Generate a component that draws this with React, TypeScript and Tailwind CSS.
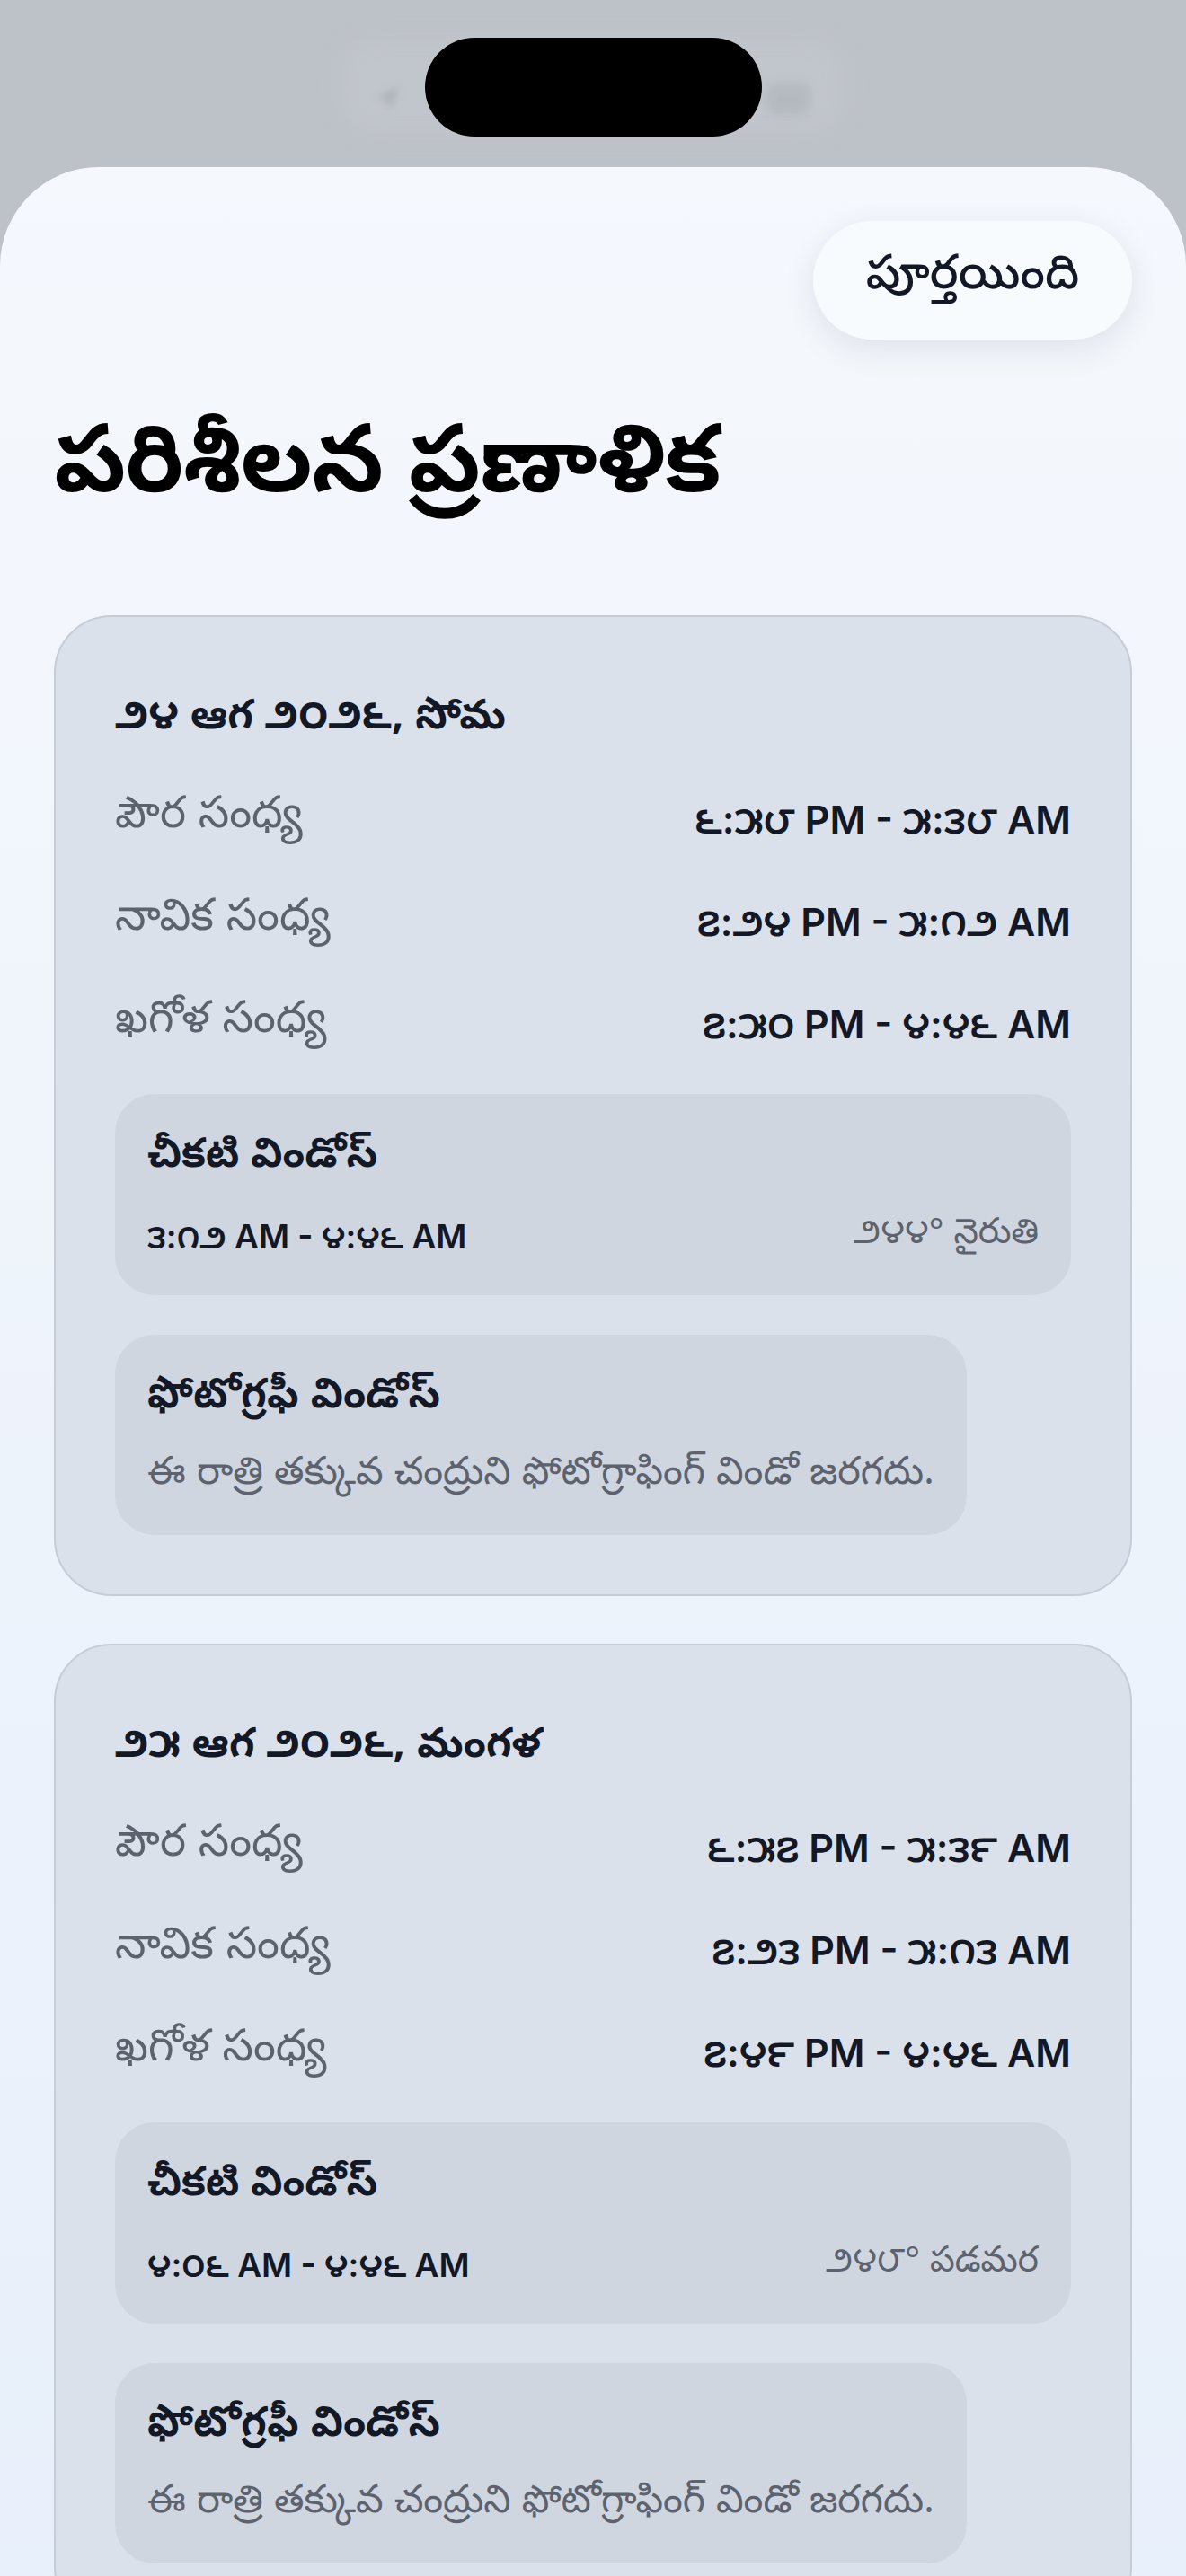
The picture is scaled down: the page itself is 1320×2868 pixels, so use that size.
import React from 'react';

type Day = {
  date: string;
  rows: { label: string; value: string }[];
  dark: { time: string; dir: string };
  photo: string;
};

const DAYS: Day[] = [
  {
    date: '౨౪ ఆగ ౨౦౨౬, సోమ',
    rows: [
      { label: 'పౌర సంధ్య', value: '౬:౫౮ PM - ౫:౩౮ AM' },
      { label: 'నావిక సంధ్య', value: '౭:౨౪ PM - ౫:౧౨ AM' },
      { label: 'ఖగోళ సంధ్య', value: '౭:౫౦ PM - ౪:౪౬ AM' },
    ],
    dark: { time: '౩:౧౨ AM - ౪:౪౬ AM', dir: '౨౪౪° నైరుతి' },
    photo: 'ఈ రాత్రి తక్కువ చంద్రుని ఫోటోగ్రాఫింగ్ విండో జరగదు.',
  },
  {
    date: '౨౫ ఆగ ౨౦౨౬, మంగళ',
    rows: [
      { label: 'పౌర సంధ్య', value: '౬:౫౭ PM - ౫:౩౯ AM' },
      { label: 'నావిక సంధ్య', value: '౭:౨౩ PM - ౫:౧౩ AM' },
      { label: 'ఖగోళ సంధ్య', value: '౭:౪౯ PM - ౪:౪౬ AM' },
    ],
    dark: { time: '౪:౦౬ AM - ౪:౪౬ AM', dir: '౨౪౮° పడమర' },
    photo: 'ఈ రాత్రి తక్కువ చంద్రుని ఫోటోగ్రాఫింగ్ విండో జరగదు.',
  },
];

const TE = "font-['Noto_Sans_Telugu','Noto_Sans',Inter,sans-serif]";
const NUM = "font-['Inter','Noto_Sans_Telugu','Noto_Sans',sans-serif]";

function DayCard({ day }: { day: Day }) {
  return (
    <div className="rounded-[64px] border-2 border-[#c7cdd6] bg-[#dbe1ea] px-[66px] pt-[80px] pb-[66px]">
      <h3 className={`${TE} text-[46px] leading-[70px] font-bold text-[#121826]`}>{day.date}</h3>

      <div className="mt-[18px] flex flex-col">
        {day.rows.map((r) => (
          <div key={r.label} className="flex h-[114px] items-center justify-between">
            <span className={`${TE} text-[49px] text-[#5c636f]`}>{r.label}</span>
            <span className={`${NUM} text-[43px] font-semibold text-[#121826]`}>{r.value}</span>
          </div>
        ))}
      </div>

      <div className="mt-[21px] rounded-[44px] bg-[#d0d6df] px-[36px] pt-[43px] pb-[35px]">
        <h4 className={`${TE} text-[45px] leading-[60px] font-bold text-[#121826]`}>చీకటి విండోస్</h4>
        <div className="mt-[26px] flex h-[60px] items-center justify-between">
          <span className={`${NUM} text-[37px] font-semibold text-[#121826]`}>{day.dark.time}</span>
          <span className={`${TE} text-[39px] text-[#5c636f]`}>{day.dark.dir}</span>
        </div>
      </div>

      <div className="mt-[44px] flex">
        <div className="rounded-[44px] bg-[#d0d6df] px-[36px] pt-[42px] pb-[35px]">
          <h4 className={`${TE} text-[46px] leading-[60px] font-bold text-[#121826]`}>ఫోటోగ్రఫీ విండోస్</h4>
          <p className={`${TE} mt-[26px] text-[43px] leading-[60px] text-[#5c636f]`}>{day.photo}</p>
        </div>
      </div>
    </div>
  );
}

export default function App() {
  return (
    <div className="min-h-[2868px] w-[1320px] overflow-hidden bg-[#bdc1c8]">
      {/* status area behind the sheet, blurred */}
      <div className="relative flex h-[186px] justify-center pt-[42px]">
        <div className="absolute left-[380px] top-[44px] h-[104px] w-[560px] rounded-[40px] bg-[#c3c7ce] opacity-70 blur-[12px]" />
        <svg
          className="absolute left-[414px] top-[90px] h-[40px] w-[36px] opacity-50 blur-[4px]"
          viewBox="0 0 24 24"
          fill="#9aa0a9"
        >
          <path d="M3 11 21 3l-8 18-2-8z" />
        </svg>
        <div className="absolute left-[852px] top-[92px] h-[36px] w-[50px] rounded-[10px] bg-[#a9aeb6] opacity-50 blur-[6px]" />
        <div className="relative h-[110px] w-[375px] rounded-full bg-black" />
      </div>

      {/* sheet */}
      <div className="rounded-t-[110px] bg-gradient-to-b from-[#f5f8fd] to-[#e7effa] px-[60px] pt-[60px] pb-[80px]">
        <div className="flex justify-end">
          <button
            className={`${TE} flex h-[132px] w-[355px] items-center justify-center rounded-full bg-[#f8fbfe] text-[53px] font-medium text-[#121826] shadow-[0_10px_36px_rgba(30,40,60,0.10)]`}
          >
            పూర్తయింది
          </button>
        </div>

        <h1 className={`${TE} mt-[79px] text-[104px] leading-[140px] font-bold tracking-[-1px] text-black`}>
          పరిశీలన ప్రణాళిక
        </h1>

        <div className="mt-[88px] flex flex-col gap-[53px]">
          {DAYS.map((d) => (
            <DayCard key={d.date} day={d} />
          ))}
        </div>
      </div>
    </div>
  );
}
